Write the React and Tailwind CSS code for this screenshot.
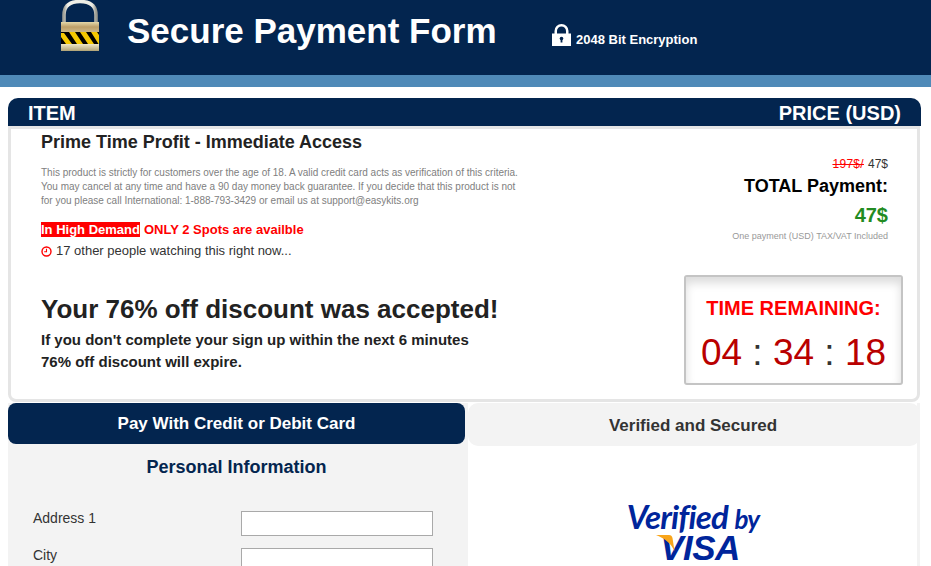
function Padlock() {
  return (
    <svg width="42" height="52" viewBox="0 0 42 52" className="block">
      <defs>
        <linearGradient id="shackle" x1="0" y1="0" x2="1" y2="0">
          <stop offset="0" stopColor="#a3a39a" />
          <stop offset="0.12" stopColor="#f2f2ea" />
          <stop offset="0.88" stopColor="#ecece4" />
          <stop offset="1" stopColor="#9a9a90" />
        </linearGradient>
        <linearGradient id="brass" x1="0" y1="0" x2="0" y2="1">
          <stop offset="0" stopColor="#e4d8aa" />
          <stop offset="0.5" stopColor="#bd9f68" />
          <stop offset="1" stopColor="#cdb887" />
        </linearGradient>
        <linearGradient id="base" x1="0" y1="0" x2="0" y2="1">
          <stop offset="0" stopColor="#efe7c6" />
          <stop offset="1" stopColor="#b0a376" />
        </linearGradient>
      </defs>
      <path d="M5 23V15C5 5 11 1.500 21 1.500S37 5 37 15v8" fill="none" stroke="url(#shackle)" strokeWidth="3.500" />
      <rect x="2" y="22" width="38" height="10" fill="url(#brass)" />
      <rect x="2" y="32" width="38" height="12" fill="#000" />
      <path d="M2 33h3l8 11H7l-5-7zM10 32h6l8 12h-6zM21 32h6l8 12h-6zM32 32h6l2 3v9h-0.500z" fill="#f5c800" />
      <rect x="2" y="44" width="38" height="7" fill="url(#base)" />
    </svg>
  );
}

function SmallLock() {
  return (
    <svg width="19" height="22" viewBox="0 0 19 22" className="block">
      <path
        d="M0 9.500h2.500V7a7 7 0 0 1 14 0v2.500H19V22H0zM5 9.500h9V7a4.500 4.500 0 0 0-9 0z"
        fill="#fff"
        fillRule="evenodd"
      />
      <circle cx="9.500" cy="14.500" r="1.800" fill="#03254f" />
      <rect x="8.600" y="15" width="1.800" height="3.500" fill="#03254f" />
    </svg>
  );
}

function ClockIcon() {
  return (
    <svg width="11" height="11" viewBox="0 0 11 11" className="block shrink-0">
      <circle cx="5.500" cy="5.500" r="4.500" fill="none" stroke="#f00" strokeWidth="1.400" />
      <path d="M5.500 2.800v3h-2.300" fill="none" stroke="#f00" strokeWidth="1.100" />
    </svg>
  );
}

function FormRow({ label }) {
  return (
    <div className="flex items-start pl-[25px] h-[37px]">
      <div className="w-[208px] text-[14px] leading-[14px] text-[#333]">{label}</div>
      <div className="w-[192px] h-[25px] bg-white border border-[#a9a9a9]"></div>
    </div>
  );
}

export default function App() {
  return (
    <div className="w-[931px] h-[566px] overflow-hidden bg-white font-['Liberation_Sans',Arial,sans-serif]">
      <div className="bg-[#03254f] h-[75px] flex items-start">
        <div className="ml-[59px] w-[68px] shrink-0">
          <Padlock />
        </div>
        <h1 className="text-[35px] leading-[42px] mt-[10px] font-bold text-white w-[425px] shrink-0">
          Secure Payment Form
        </h1>
        <div className="flex items-end mt-[24px] text-white">
          <SmallLock />
          <span className="ml-[5px] -mb-[1px] text-[13px] leading-[15px] font-bold">2048 Bit Encryption</span>
        </div>
      </div>
      <div className="h-[12px] bg-[#4f8ab8]"></div>

      <div className="w-[913px] ml-[8px] mt-[11px]">
        <div className="h-[28px] pt-[2px] bg-[#03254f] rounded-t-[10px] flex justify-between items-center px-[20px] text-white text-[20px] font-bold">
          <span>ITEM</span>
          <span>PRICE (USD)</span>
        </div>

        <div className="w-[912px] h-[276px] border-[3px] border-[#e5e5e5] rounded-b-[8px] pl-[30px] pr-[14px] flex justify-between">
          <div className="w-[500px]">
            <h2 className="text-[18px] leading-[21px] font-bold text-[#222] mt-[3px]">
              Prime Time Profit - Immediate Access
            </h2>
            <p className="mt-[13px] text-[10px] leading-[14px] text-[#808080] w-[485px]">
              This product is strictly for customers over the age of 18. A valid credit card acts as verification of this
              criteria. You may cancel at any time and have a 90 day money back guarantee. If you decide that this product is
              not for you please call International: 1-888-793-3429 or email us at support@easykits.org
            </p>
            <div className="mt-[14px] text-[13px] leading-[15px] text-[#f00] font-bold flex">
              <span className="bg-[#f00] text-white">In High Demand</span>
              <span className="ml-[4px]">ONLY 2 Spots are availble</span>
            </div>
            <div className="mt-[6px] flex items-center text-[13px] leading-[16px] text-[#333]">
              <ClockIcon />
              <span className="ml-[4px]">17 other people watching this right now...</span>
            </div>
            <h3 className="mt-[34px] text-[26px] leading-[32px] font-bold text-[#222]">
              Your 76% off discount was accepted!
            </h3>
            <p className="mt-[4px] text-[15px] leading-[22px] font-bold text-[#222]">
              If you don't complete your sign up within the next 6 minutes
              <br />
              76% off discount will expire.
            </p>
          </div>

          <div className="w-[219px] flex flex-col items-end">
            <div className="pr-[15px] pt-[28px] flex flex-col items-end">
              <div className="text-[12px] leading-[14px] text-[#333]">
                <span className="text-[#f00] line-through tracking-[0.3px]">197$/</span>
                <span className="ml-[4px]">47$</span>
              </div>
              <div className="mt-[4px] text-[18px] leading-[22px] font-bold text-black">TOTAL Payment:</div>
              <div className="mt-[6px] text-[20px] leading-[24px] font-bold text-[#228b22]">47$</div>
              <div className="mt-[3px] text-[9px] leading-[12px] text-[#999]">One payment (USD) TAX/VAT Included</div>
            </div>
            <div className="mt-[33px] w-[219px] h-[110px] border-[2px] border-[#c4c4c4] rounded-[3px] shadow-[inset_0_6px_10px_rgba(0,0,0,0.14)] flex flex-col items-center">
              <div className="mt-[19px] text-[20px] leading-[24px] font-bold text-[#f00]">TIME REMAINING:</div>
              <div className="mt-[11px] text-[37px] leading-[44px] text-[#b90000] whitespace-pre">
                04 <span className="text-[#333]">:</span> 34 <span className="text-[#333]">:</span> 18
              </div>
            </div>
          </div>
        </div>

        <div className="flex mt-[1px]">
          <div className="w-[460px] bg-[#f3f3f3] h-[163px] shrink-0">
            <div className="w-[457px] h-[41px] bg-[#03254f] rounded-[8px] flex items-center justify-center text-white text-[17px] font-bold">
              Pay With Credit or Debit Card
            </div>
            <div className="w-[457px] mt-[12px] text-center text-[18px] leading-[22px] font-bold text-[#03254f]">
              Personal Information
            </div>
            <div className="mt-[33px]">
              <FormRow label="Address 1" />
              <FormRow label="City" />
            </div>
          </div>
          <div className="w-[452px] h-[163px] border-r-[3px] border-[#f3f3f3] flex flex-col">
            <div className="-mr-[3px] h-[43px] pt-[2px] pr-[2px] shrink-0 bg-[#f3f3f3] rounded-[10px] flex items-center justify-center text-[17px] font-bold text-[#333]">
              Verified and Secured
            </div>
            <div className="flex flex-col items-center mt-[55px] ml-[1px]">
              <div className="font-['Lato',sans-serif] italic font-bold text-[#00259b] text-[33px] leading-[30px] tracking-[-0.8px] whitespace-pre">
                Verified <span className="text-[26px]">by</span>
              </div>
              <div className="relative ml-[14px] italic font-bold text-[#00259b] text-[35px] leading-[28px] tracking-[-0.5px]">
                <svg width="20" height="18" viewBox="0 0 20 18" className="absolute -left-[4px] top-[1px]">
                  <path d="M0 0h13c2 0 3 1 3.500 3l2 13C15 8 8 3 0 0z" fill="#f9a51a" />
                </svg>
                VISA
              </div>
            </div>
          </div>
        </div>
      </div>
    </div>
  );
}
